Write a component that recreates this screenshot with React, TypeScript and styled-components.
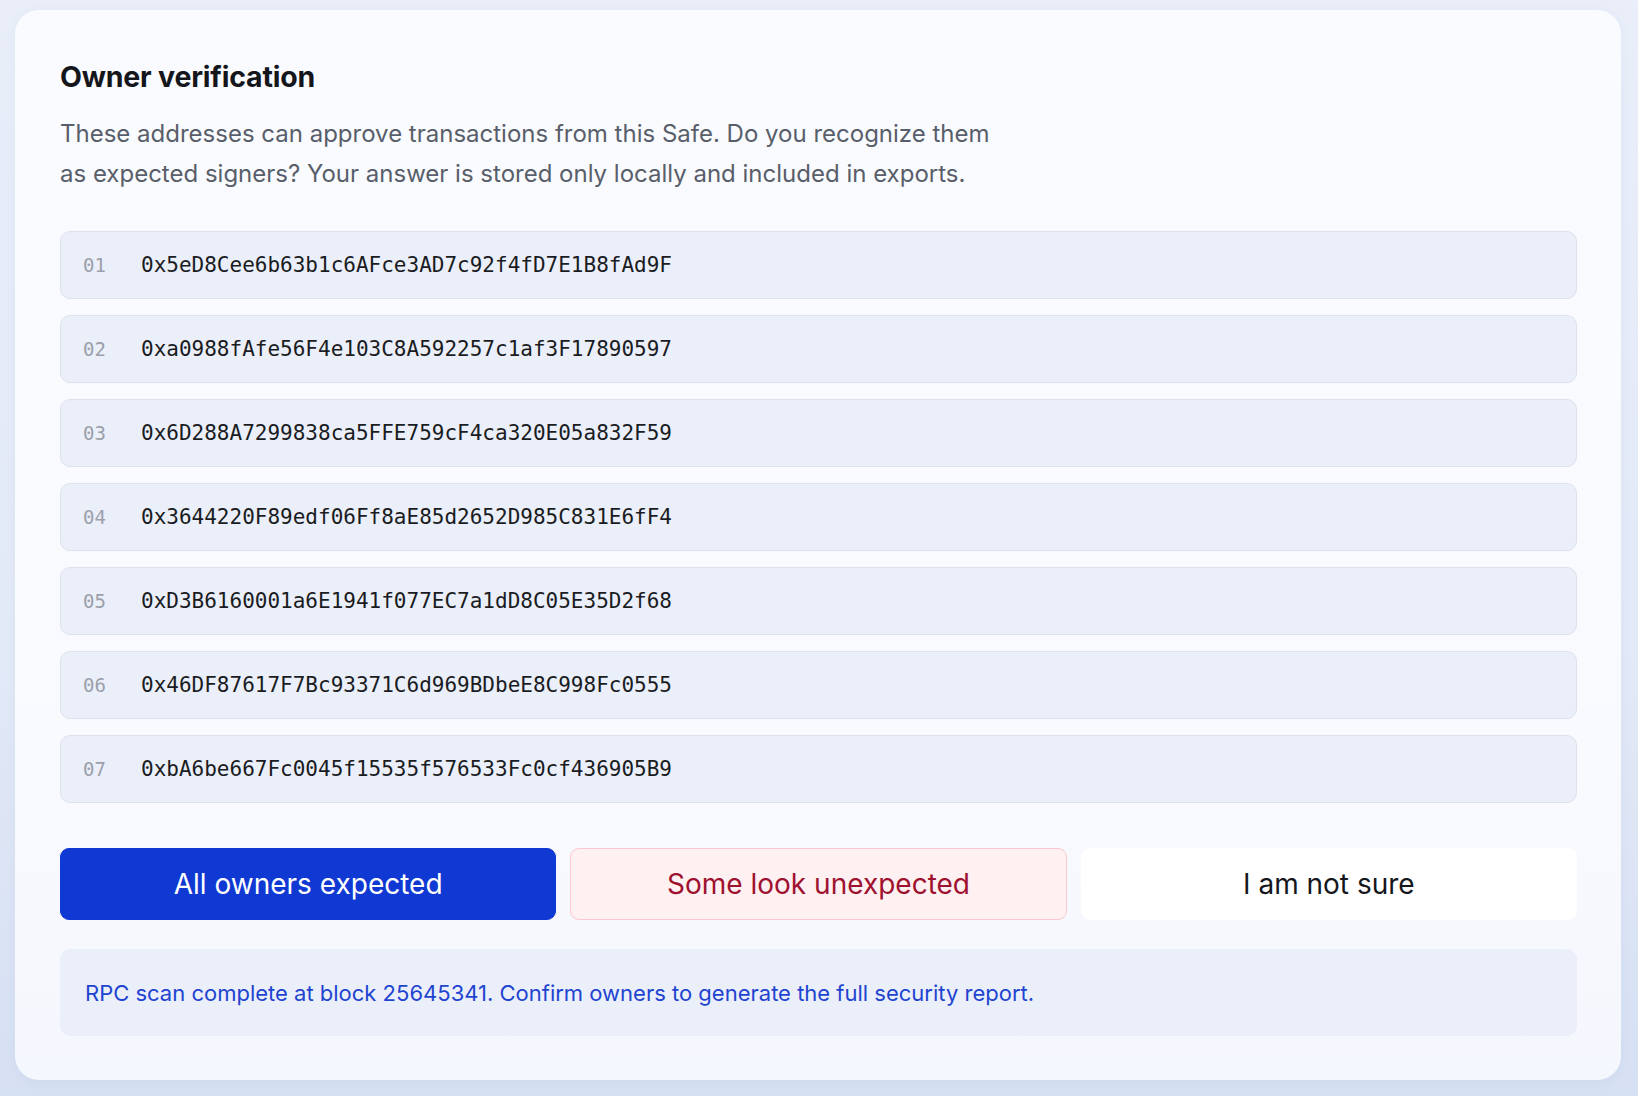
import styled, { createGlobalStyle } from "styled-components";
import { useState } from "react";

const GlobalStyle = createGlobalStyle`
  * {
    box-sizing: border-box;
  }

  body {
    margin: 0;
    min-height: 100vh;
    font-family: Inter, "Noto Sans", "Liberation Sans", sans-serif;
    background: linear-gradient(180deg, #e9eef9 0%, #e2e9f7 60%, #d6e0f3 100%);
  }
`;

type Answer = "expected" | "unexpected" | "unsure";

const Page = styled.main`
  padding: 10px 17px 16px 15px;
`;

const Card = styled.section`
  background: linear-gradient(180deg, #fafbfe 0%, #f9fafe 70%, #f4f7fd 100%);
  border-radius: 24px;
  padding: 50px 44px 44px 45px;
  box-shadow: 0 2px 10px rgba(120, 140, 190, 0.08);
`;

const Title = styled.h2`
  margin: 0;
  font-size: 28.5px;
  font-weight: 700;
  line-height: 34px;
  letter-spacing: -0.2px;
  color: #14161c;
`;

const Lead = styled.p`
  margin: 20px 0 0;
  max-width: 940px;
  font-size: 24px;
  line-height: 40px;
  color: #585e6a;
`;

const OwnerList = styled.ol`
  list-style: none;
  margin: 37px 0 0;
  padding: 0;
  display: flex;
  flex-direction: column;
  gap: 16px;
`;

const OwnerRow = styled.li`
  height: 68px;
  display: flex;
  align-items: center;
  padding: 0 22px;
  background: #ebeffa;
  border: 1px solid #dde2ee;
  border-radius: 10px;
  font-family: "DejaVu Sans Mono", "Liberation Mono", monospace;
`;

const Index = styled.span`
  width: 58px;
  flex-shrink: 0;
  font-size: 19px;
  color: #9ba0aa;
`;

const Address = styled.span`
  font-size: 21px;
  color: #1a1c22;
`;

const Choices = styled.div`
  margin-top: 45px;
  display: grid;
  grid-template-columns: repeat(3, 1fr);
  gap: 14px;
`;

const tones = {
  expected: { bg: "#1038d2", border: "#1038d2", color: "#ffffff" },
  unexpected: { bg: "#fff0f1", border: "#fac8ce", color: "#9e1230" },
  unsure: { bg: "#ffffff", border: "#ffffff", color: "#15171c" },
};

const Choice = styled.button<{ $tone: Answer }>`
  height: 72px;
  border-radius: 9px;
  border: 1px solid ${(p) => tones[p.$tone].border};
  background: ${(p) => tones[p.$tone].bg};
  color: ${(p) => tones[p.$tone].color};
  font-family: inherit;
  font-size: 28px;
  font-weight: 400;
  cursor: pointer;
`;

const Notice = styled.div`
  margin-top: 29px;
  height: 87px;
  display: flex;
  align-items: center;
  padding: 0 25px;
  background: #eaeffa;
  border-radius: 10px;
  font-size: 22px;
  color: #1f44cf;
`;

const owners = [
  "0x5eD8Cee6b63b1c6AFce3AD7c92f4fD7E1B8fAd9F",
  "0xa0988fAfe56F4e103C8A592257c1af3F17890597",
  "0x6D288A7299838ca5FFE759cF4ca320E05a832F59",
  "0x3644220F89edf06Ff8aE85d2652D985C831E6fF4",
  "0xD3B6160001a6E1941f077EC7a1dD8C05E35D2f68",
  "0x46DF87617F7Bc93371C6d969BDbeE8C998Fc0555",
  "0xbA6be667Fc0045f15535f576533Fc0cf436905B9",
];

const choices: { key: Answer; label: string }[] = [
  { key: "expected", label: "All owners expected" },
  { key: "unexpected", label: "Some look unexpected" },
  { key: "unsure", label: "I am not sure" },
];

export default function App() {
  const [answer, setAnswer] = useState<Answer | null>(null);

  return (
    <Page>
      <GlobalStyle />
      <Card>
        <Title>Owner verification</Title>
        <Lead>
          These addresses can approve transactions from this Safe. Do you
          recognize them as expected signers? Your answer is stored only
          locally and included in exports.
        </Lead>
        <OwnerList>
          {owners.map((addr, i) => (
            <OwnerRow key={addr}>
              <Index>{String(i + 1).padStart(2, "0")}</Index>
              <Address>{addr}</Address>
            </OwnerRow>
          ))}
        </OwnerList>
        <Choices>
          {choices.map((c) => (
            <Choice
              key={c.key}
              $tone={c.key}
              aria-pressed={answer === c.key}
              onClick={() => setAnswer(c.key)}
            >
              {c.label}
            </Choice>
          ))}
        </Choices>
        <Notice>
          RPC scan complete at block 25645341. Confirm owners to generate the
          full security report.
        </Notice>
      </Card>
    </Page>
  );
}
